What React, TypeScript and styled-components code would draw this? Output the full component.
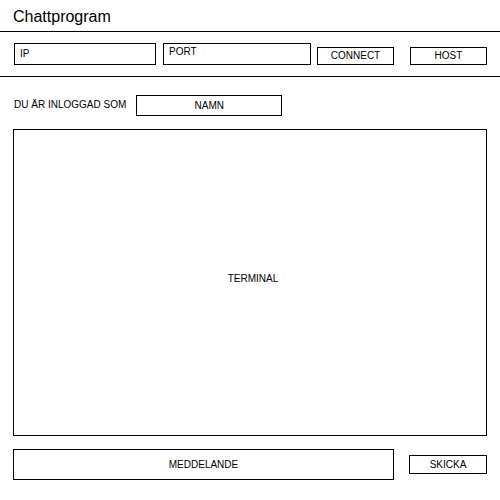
import React from 'react';
import styled, { createGlobalStyle } from 'styled-components';

const GlobalStyle = createGlobalStyle`
  html, body {
    margin: 0;
    padding: 0;
    background: #ffffff;
  }
  body {
    font-family: 'Liberation Sans', Arial, sans-serif;
    color: #000;
  }
  * {
    box-sizing: border-box;
  }
`;

const Page = styled.div`
  width: 500px;
  height: 500px;
  display: flex;
  flex-direction: column;
  overflow: hidden;
`;

const Header = styled.header`
  height: 32px;
  padding: 7px 0 0 13px;
  border-bottom: 1px solid #000;
`;

const Title = styled.h1`
  margin: 0;
  font-size: 16px;
  font-weight: normal;
  line-height: 20px;
`;

const ConnectRow = styled.div`
  height: 45px;
  padding: 11px 0 0 14px;
  display: flex;
  align-items: flex-start;
  border-bottom: 1px solid #000;
`;

const Field = styled.div<{ width: number; ml?: number }>`
  width: ${({ width }) => width}px;
  height: 22px;
  margin-left: ${({ ml }) => ml || 0}px;
  border: 1px solid #000;
  padding: 4px 0 0 5px;
  font-size: 10px;
  line-height: 12px;
`;

const Button = styled.div<{ width: number; height: number; mt?: number; ml?: number }>`
  width: ${({ width }) => width}px;
  height: ${({ height }) => height}px;
  margin-top: ${({ mt }) => mt || 0}px;
  margin-left: ${({ ml }) => ml || 0}px;
  border: 1px solid #000;
  display: flex;
  align-items: center;
  justify-content: center;
  font-size: 10px;
  line-height: 12px;
`;

const Main = styled.div`
  padding: 18px 13px 0 13px;
  display: flex;
  flex-direction: column;
`;

const NameRow = styled.div`
  display: flex;
  align-items: center;
  padding-left: 1px;
`;

const Label = styled.span`
  font-size: 10px;
  line-height: 12px;
  margin-top: -2px;
`;

const Terminal = styled.div`
  margin-top: 13px;
  width: 474px;
  height: 307px;
  border: 1px solid #000;
  display: flex;
  align-items: center;
  justify-content: center;
  padding: 0 0 8px 6px;
  font-size: 10px;
`;

const BottomRow = styled.div`
  margin-top: 13px;
  display: flex;
  align-items: center;
`;

export default function App() {
  return (
    <>
      <GlobalStyle />
      <Page>
        <Header>
          <Title>Chattprogram</Title>
        </Header>
        <ConnectRow>
          <Field width={142}>IP</Field>
          <Field width={148} ml={7} style={{ paddingTop: 2 }}>
            PORT
          </Field>
          <Button width={77} height={18} mt={4} ml={6}>
            CONNECT
          </Button>
          <Button width={77} height={18} mt={4} ml={16}>
            HOST
          </Button>
        </ConnectRow>
        <Main>
          <NameRow>
            <Label>DU ÄR INLOGGAD SOM</Label>
            <Button width={146} height={21} ml={10}>
              NAMN
            </Button>
          </NameRow>
          <Terminal>TERMINAL</Terminal>
          <BottomRow>
            <Button width={381} height={31}>
              MEDDELANDE
            </Button>
            <Button width={78} height={19} ml={15}>
              SKICKA
            </Button>
          </BottomRow>
        </Main>
      </Page>
    </>
  );
}
